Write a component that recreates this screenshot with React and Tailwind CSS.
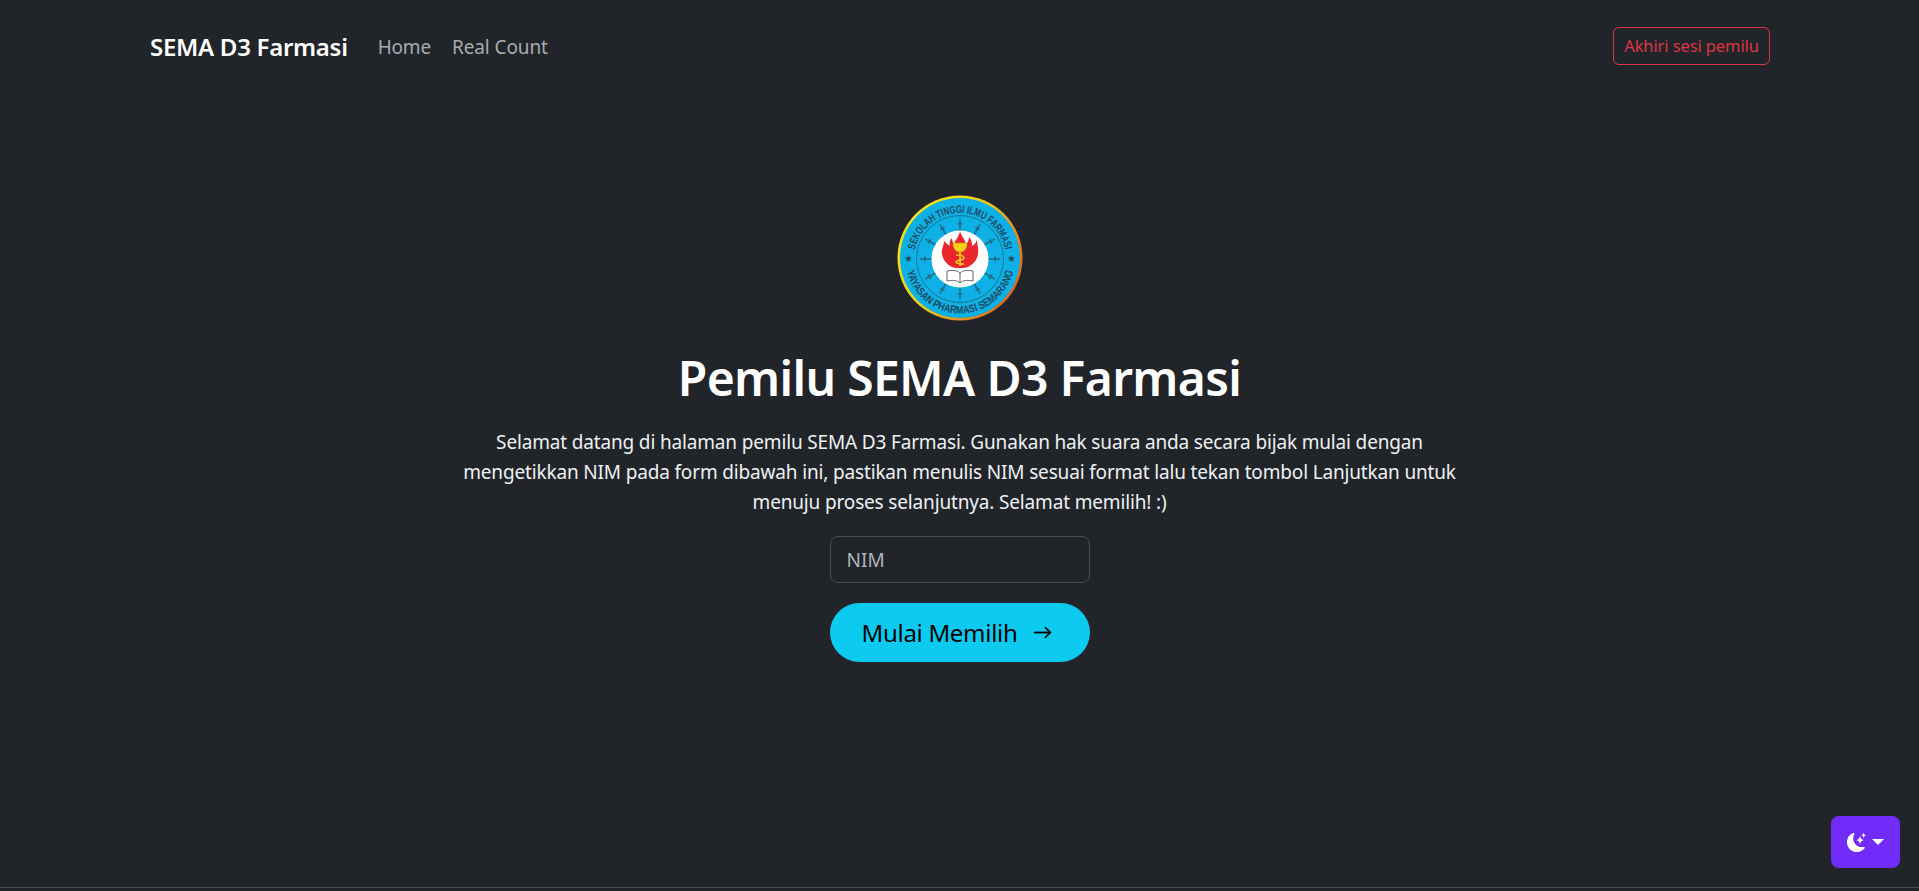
import { BsMoonStarsFill, BsArrowRight } from 'react-icons/bs';

const font = { fontFamily: '"Noto Sans", sans-serif' };

function Logo() {
  const spokes = [0, 30, 60, 90, 120, 150, 180, 210, 240, 270, 300, 330];
  return (
    <svg width="128" height="128" viewBox="0 0 128 128" className="block">
      <defs>
        <linearGradient id="rim" x1="0" y1="0.15" x2="1" y2="0.75">
          <stop offset="0" stopColor="#f7ea1a" />
          <stop offset="0.45" stopColor="#f0cf1c" />
          <stop offset="0.7" stopColor="#ee9a1e" />
          <stop offset="1" stopColor="#d9611c" />
        </linearGradient>
        <path id="top-arc" d="M 18 64 A 46 46 0 0 1 110 64" />
        <path id="bottom-arc" d="M 9.5 64 A 54.5 54.5 0 0 0 118.5 64" />
      </defs>
      <circle cx="64" cy="63" r="62.5" fill="url(#rim)" />
      <circle cx="64" cy="63" r="60" fill="#0db1e6" />
      <circle cx="64" cy="64" r="43.5" fill="none" stroke="#1f5f7a" strokeWidth="0.8" />
      {spokes.map((a) => (
        <g key={a} transform={`rotate(${a} 64 64)`}>
          <rect x="63.2" y="24" width="1.6" height="12" fill="#1f6d8a" />
          <rect x="61.5" y="28" width="5" height="1.6" fill="#1f6d8a" />
        </g>
      ))}
      <circle cx="64" cy="64" r="28.5" fill="#ffffff" />
      <path
        d="M64 36C65 41 69 44 70 49C72 47 73 45 73 42C76 45 76 49 76 51C78 50 80 48 81 45C81 50 83 53 82 59C81 66 75 72 68 73L60 73C53 72 47 66 46 59C45 54 48 51 48 46C50 48 52 50 54 51C53 48 54 45 56 43C56 46 57 48 58 49C59 45 63 42 64 36Z"
        fill="#e8262c"
      />
      <path d="M57 48h14c0 6-3 9-7 9s-7-3-7-9z" fill="#f8d21a" stroke="#c9a30f" strokeWidth="0.5" />
      <path d="M64 57v14M60 60c4 0 8 1 8 3s-8 2-8 4 5 2 8 2" fill="none" stroke="#f8d21a" strokeWidth="1.6" />
      <path d="M51 76c5-1 10-1 13 2 3-3 8-3 13-2v10c-5-1-10-1-13 2-3-3-8-3-13-2z" fill="#ffffff" stroke="#555" strokeWidth="0.9" />
      <path d="M64 78v10" stroke="#555" strokeWidth="0.9" />
      <text x="12.5" y="67" fontSize="10" fill="#1c4a63" textAnchor="middle">★</text>
      <text x="115.5" y="67" fontSize="10" fill="#1c4a63" textAnchor="middle">★</text>
      <text fontSize="11" fontWeight="700" fill="#1c4a63" style={{ fontFamily: '"Liberation Sans", sans-serif' }}>
        <textPath href="#top-arc" startOffset="50%" textAnchor="middle" textLength="126" lengthAdjust="spacingAndGlyphs">SEKOLAH TINGGI ILMU FARMASI</textPath>
      </text>
      <text fontSize="11" fontWeight="700" fill="#1c4a63" style={{ fontFamily: '"Liberation Sans", sans-serif' }}>
        <textPath href="#bottom-arc" startOffset="50%" textAnchor="middle" textLength="146" lengthAdjust="spacingAndGlyphs">YAYASAN PHARMASI SEMARANG</textPath>
      </text>
    </svg>
  );
}

export default function App() {
  return (
    <div style={font} className="relative flex h-screen flex-col overflow-hidden bg-[#212529] text-[#dee2e6]">
      <nav className="flex h-[94px] shrink-0 items-center justify-between pl-[150px] pr-[149px]">
        <div className="flex items-center">
          <a className="mr-[30px] text-[24px] font-semibold tracking-[-0.28px] text-white">SEMA D3 Farmasi</a>
          <a className="text-[19px] tracking-[-0.2px] text-[#a7acb1]">Home</a>
          <a className="ml-[21px] text-[19px] tracking-[-0.1px] text-[#a7acb1]">Real Count</a>
        </div>
        <button className="mb-[2px] h-[38px] w-[157px] rounded-md border border-[#dc3545] text-[16.5px] tracking-[-0.1px] text-[#dc3545]">
          Akhiri sesi pemilu
        </button>
      </nav>

      <main className="flex flex-1 flex-col items-center pt-[101px]">
        <Logo />
        <h1 className="mt-[26px] text-[48px] leading-[58px] font-semibold tracking-[-0.65px] text-white">Pemilu SEMA D3 Farmasi</h1>
        <p className="mt-[20px] w-[1000px] text-center text-[19px] leading-[30px] tracking-[-0.16px] text-[#eef1f4]">
          Selamat datang di halaman pemilu SEMA D3 Farmasi. Gunakan hak suara anda secara bijak mulai dengan mengetikkan NIM pada form dibawah ini, pastikan menulis NIM sesuai format lalu tekan tombol Lanjutkan untuk menuju proses selanjutnya. Selamat memilih! :)
        </p>
        <input
          placeholder="NIM"
          className="mt-[19px] h-[47px] w-[260px] rounded-lg border border-[#495057] bg-transparent px-4 text-[19px] text-[#dee2e6] outline-none placeholder:text-[#b0b5ba]"
        />
        <button className="mt-[20px] flex h-[59px] w-[260px] items-center justify-center gap-[16px] rounded-full bg-[#0dcaf0] pr-[5px] text-[24px] tracking-[-0.3px] text-black">
          Mulai Memilih
          <BsArrowRight size={19} strokeWidth={0.6} />
        </button>
      </main>

      <div className="h-1 shrink-0 border-t border-[#495057]" />

      <button className="absolute top-[816px] left-[1831px] flex h-[52px] w-[69px] items-center justify-center gap-[6px] rounded-lg bg-[#712cf9] text-white">
        <BsMoonStarsFill size={19} />
        <span className="h-0 w-0 border-x-[6px] border-t-[6px] border-x-transparent border-t-white" />
      </button>
    </div>
  );
}
